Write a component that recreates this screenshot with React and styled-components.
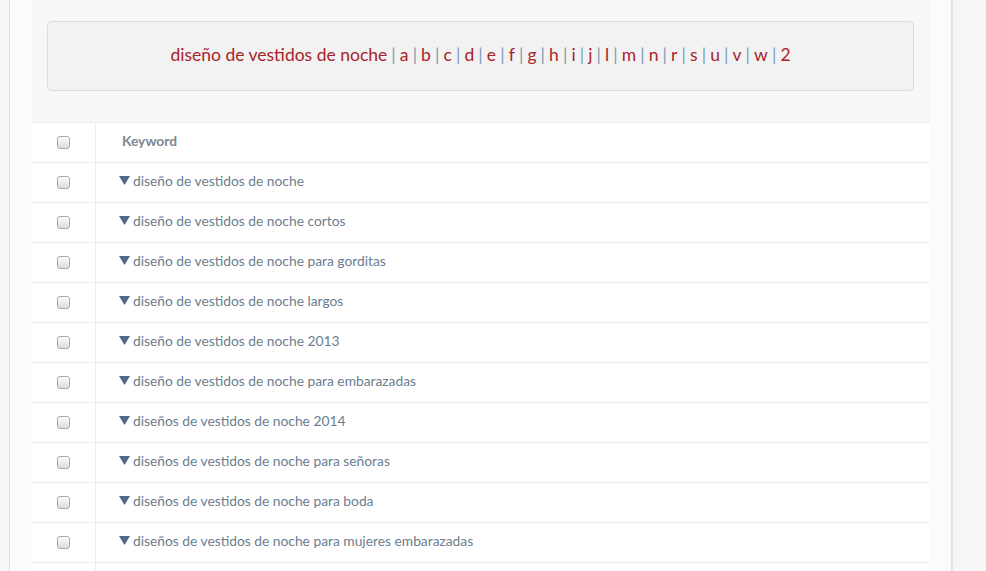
import React from "react";
import styled, { createGlobalStyle } from "styled-components";

const GlobalStyle = createGlobalStyle`
  html, body {
    margin: 0;
    padding: 0;
    background: #f6f6f6;
    font-family: Lato, "Open Sans", "Liberation Sans", sans-serif;
  }
`;

const Page = styled.div`
  display: flex;
  height: 571px;
  overflow: hidden;
  padding-left: 9px;
`;

const Frame = styled.div`
  display: flex;
  border-left: 1px solid #dedede;
  border-right: 2px solid #e2e2e2;
  background: #fbfbfb;
  padding: 0 21px;
`;

const Panel = styled.div`
  width: 899px;
  background: #f7f7f7;
  display: flex;
  flex-direction: column;
`;

const Header = styled.div`
  padding: 21px 16px 31px 16px;
`;

const LetterBox = styled.div`
  height: 65px;
  padding-bottom: 3px;
  background: #f2f2f2;
  border: 1px solid #dcdcdc;
  border-radius: 4px;
  display: flex;
  align-items: center;
  justify-content: center;
  font-size: 17.5px;
  color: #a8232b;
`;

const Sep = styled.span`
  color: #7d9bb5;
  margin: 0 4.1px;
`;

const Letter = styled.a`
  color: #a8232b;
  text-decoration: none;
`;

const Table = styled.div`
  background: #fff;
  flex: 1;
`;

const Row = styled.div`
  display: flex;
  height: 39px;
  border-top: 1px solid #ececec;
`;

const CheckCell = styled.div`
  width: 64px;
  border-right: 1px solid #ececec;
  display: flex;
  align-items: center;
  justify-content: center;
`;

const Check = styled.input.attrs({ type: "checkbox" })`
  appearance: none;
  width: 13px;
  height: 13px;
  margin: 0;
  border: 1px solid #a9a9a9;
  border-radius: 3px;
  background: linear-gradient(#fdfdfd, #dcdcdc);
`;

const TextCell = styled.div`
  flex: 1;
  display: flex;
  align-items: center;
  padding-left: ${(p) => (p.$head ? "26px" : "23px")};
  padding-bottom: 5px;
  font-size: 13.8px;
  color: ${(p) => (p.$head ? "#7b8794" : "#6b7d8e")};
  font-weight: ${(p) => (p.$head ? 700 : 400)};
`;

const Arrow = styled.svg`
  width: 11px;
  height: 9px;
  margin-right: 3px;
  margin-top: 1px;
`;

const letters = ["a","b","c","d","e","f","g","h","i","j","l","m","n","r","s","u","v","w","2"];

const keywords = [
  "diseño de vestidos de noche",
  "diseño de vestidos de noche cortos",
  "diseño de vestidos de noche para gorditas",
  "diseño de vestidos de noche largos",
  "diseño de vestidos de noche 2013",
  "diseño de vestidos de noche para embarazadas",
  "diseños de vestidos de noche 2014",
  "diseños de vestidos de noche para señoras",
  "diseños de vestidos de noche para boda",
  "diseños de vestidos de noche para mujeres embarazadas",
  "",
];

export default function App() {
  return (
    <>
      <GlobalStyle />
      <Page>
        <Frame>
          <Panel>
            <Header>
              <LetterBox>
                <Letter href="#">diseño de vestidos de noche</Letter>
                {letters.map((l) => (
                  <React.Fragment key={l}>
                    <Sep>|</Sep>
                    <Letter href="#">{l}</Letter>
                  </React.Fragment>
                ))}
              </LetterBox>
            </Header>
            <Table>
              <Row>
                <CheckCell>
                  <Check />
                </CheckCell>
                <TextCell $head>Keyword</TextCell>
              </Row>
              {keywords.map((k, i) => (
                <Row key={i}>
                  <CheckCell>{k && <Check />}</CheckCell>
                  <TextCell>
                    {k && (
                      <>
                        <Arrow viewBox="0 0 11 9">
                          <path d="M0 0 H11 L5.5 9 Z" fill="#4d6b84" />
                        </Arrow>
                        {k}
                      </>
                    )}
                  </TextCell>
                </Row>
              ))}
            </Table>
          </Panel>
        </Frame>
      </Page>
    </>
  );
}
